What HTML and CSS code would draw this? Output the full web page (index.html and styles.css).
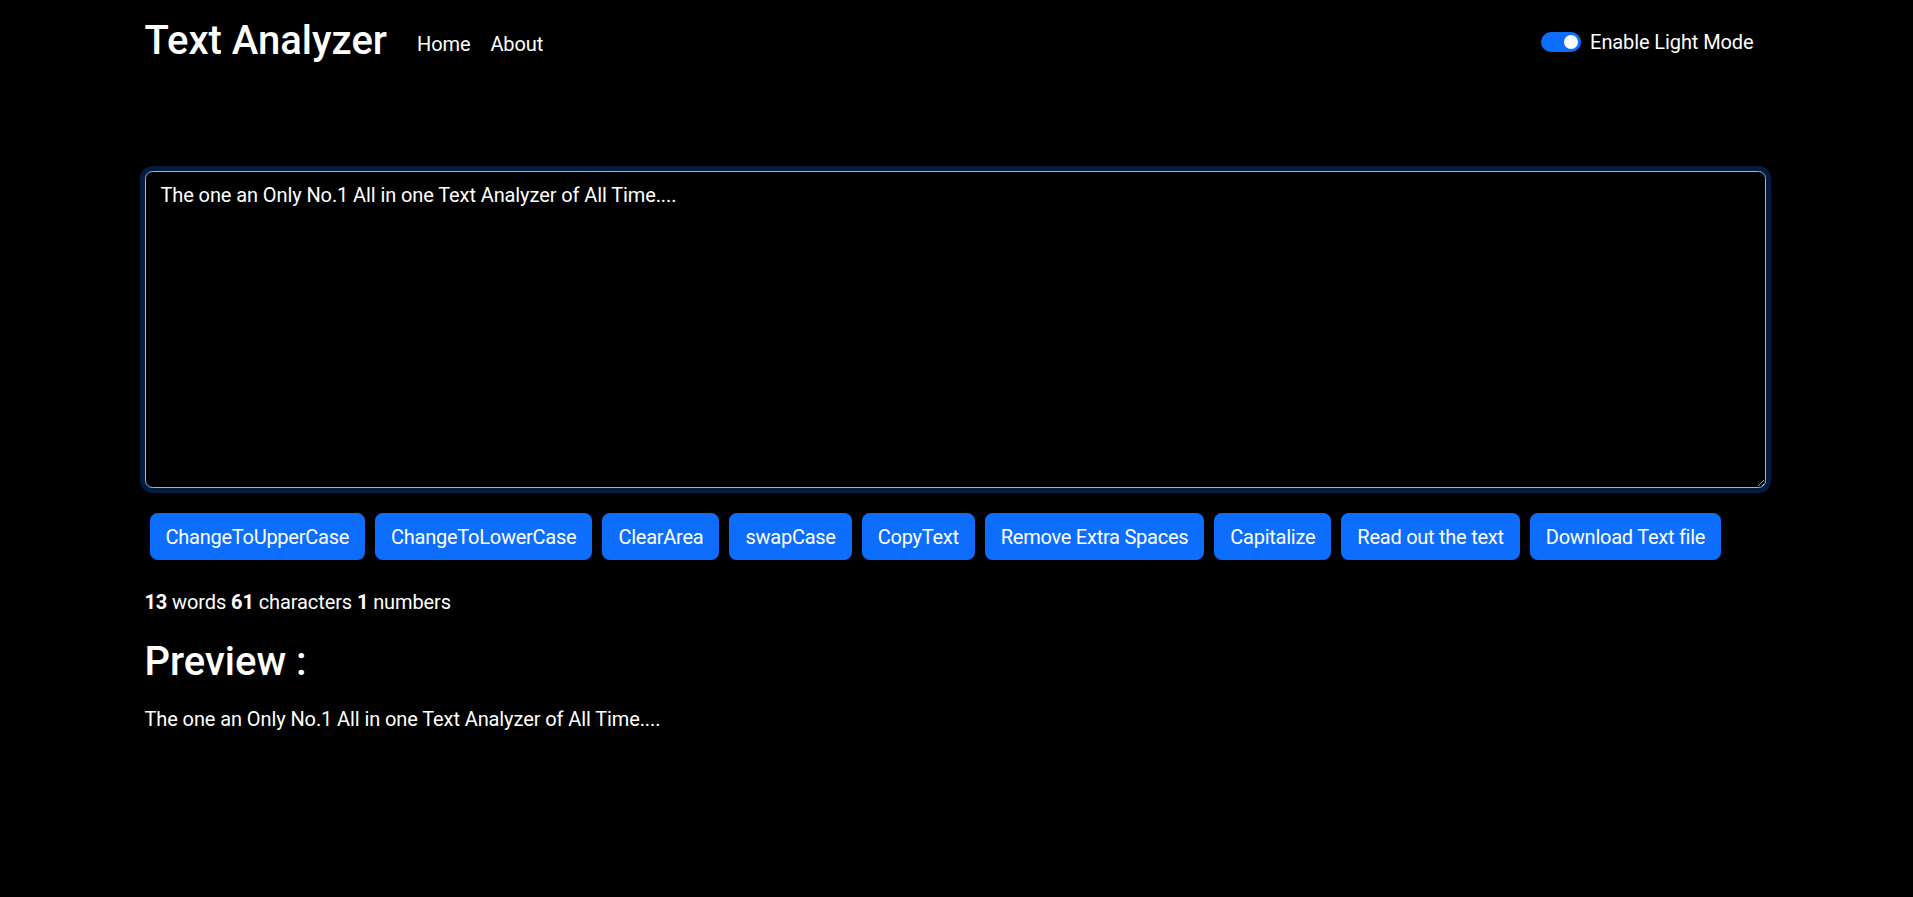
FILE: index.html
```html
<!DOCTYPE html>
<html lang="en">
<head>
<meta charset="utf-8">
<title>Text Analyzer</title>
<link rel="stylesheet" href="styles.css">
</head>
<body>
<nav class="navbar">
  <div class="nav-inner">
    <a class="brand" href="#">Text Analyzer</a>
    <ul class="nav-links">
      <li><a class="nav-link" href="#">Home</a></li>
      <li><a class="nav-link" href="#">About</a></li>
    </ul>
    <label class="mode-switch">
      <span class="switch"><span class="knob"></span></span>
      <span class="switch-label">Enable Light Mode</span>
    </label>
  </div>
</nav>

<main class="container editor">
  <div class="text-wrap">
    <textarea class="text-box" rows="10">The one an Only No.1 All in one Text Analyzer of All Time....</textarea>
  </div>
  <div class="actions">
    <button class="btn">ChangeToUpperCase</button>
    <button class="btn">ChangeToLowerCase</button>
    <button class="btn">ClearArea</button>
    <button class="btn">swapCase</button>
    <button class="btn">CopyText</button>
    <button class="btn">Remove Extra Spaces</button>
    <button class="btn">Capitalize</button>
    <button class="btn">Read out the text</button>
    <button class="btn">Download Text file</button>
  </div>
</main>

<section class="container summary">
  <p class="stats"><b>13</b> words <b>61</b> characters <b>1</b> numbers</p>
  <h2 class="preview-title">Preview :</h2>
  <p class="preview-text">The one an Only No.1 All in one Text Analyzer of All Time....</p>
</section>
</body>
</html>
```

FILE: styles.css
```css
* {
  box-sizing: border-box;
}

html, body {
  background: #000;
}

body {
  margin: 0;
  color: #fff;
  font-family: Roboto, "Liberation Sans", sans-serif;
  font-size: 20px;
  line-height: 1.5;
  letter-spacing: -0.1px;
}

.navbar {
  padding: 0;
}

.nav-inner {
  width: 1650px;
  margin: 0 auto;
  padding: 0 15px 0 13px;
  display: flex;
  align-items: flex-start;
  height: 80px;
}

.brand {
  color: #fff;
  text-decoration: none;
  font-size: 40px;
  font-weight: 500;
  line-height: 60px;
  margin-top: 11px;
  margin-right: 20px;
  letter-spacing: 0;
}

.nav-links {
  list-style: none;
  margin: 29px 0 0;
  padding: 0;
  display: flex;
}

.nav-link {
  display: block;
  color: #fff;
  text-decoration: none;
  padding: 0 10px;
  line-height: 30px;
}

.mode-switch {
  margin-left: auto;
  margin-right: 13px;
  margin-top: 27px;
  display: flex;
  align-items: center;
  gap: 9px;
  line-height: 30px;
}

.switch {
  width: 40px;
  height: 20px;
  border-radius: 10px;
  background: #0d6efd;
  display: flex;
  align-items: center;
  justify-content: flex-end;
  padding-right: 3px;
}

.knob {
  width: 14px;
  height: 14px;
  border-radius: 50%;
  background: #fff;
}

.container {
  width: 1650px;
  margin: 0 auto;
  padding: 0 16px 0 13px;
}

.editor {
  padding-top: 91px;
}

.text-wrap {
  margin-bottom: 20px;
}

.text-box {
  display: block;
  width: 100%;
  height: 317px;
  padding: 7.5px 15px;
  background: #000;
  color: #fff;
  border: 1px solid #86b7fe;
  border-radius: 7.5px;
  box-shadow: 0 0 0 5px rgba(13, 110, 253, 0.25);
  font-family: Roboto, "Liberation Sans", sans-serif;
  font-size: 20px;
  line-height: 1.5;
  letter-spacing: -0.1px;
  resize: vertical;
  outline: none;
}

.actions {
  display: flex;
  flex-wrap: wrap;
}

.btn {
  margin: 5px;
  padding: 7.5px 15px;
  border: 1px solid #0d6efd;
  border-radius: 7.5px;
  background: #0d6efd;
  color: #fff;
  font-family: Roboto, "Liberation Sans", sans-serif;
  font-size: 20px;
  line-height: 30px;
  letter-spacing: -0.25px;
  cursor: pointer;
}

.summary {
  margin-top: 22px;
}

.stats {
  margin: 0 0 21px;
}

.stats b {
  font-weight: 700;
}

.preview-title {
  margin: 0 0 18px;
  font-size: 40px;
  font-weight: 500;
  line-height: 48px;
  letter-spacing: 0;
}

.preview-text {
  margin: 0;
}
```
